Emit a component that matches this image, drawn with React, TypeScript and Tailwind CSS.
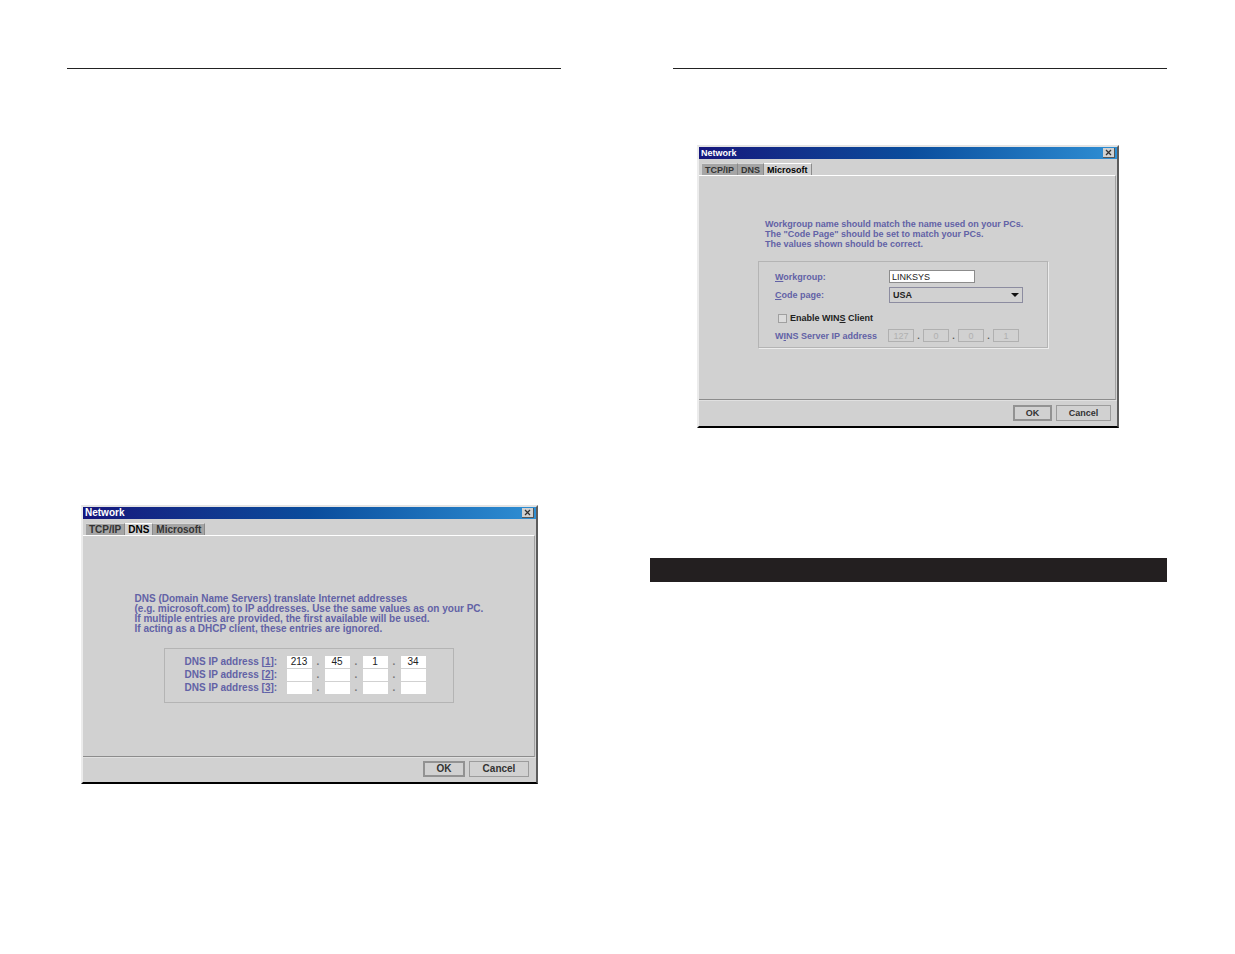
import { useId, useState, type ReactNode } from "react";

type DialogProps = {
  active: string;
  textClass: string;
  actionsClass: string;
  okClass: string;
  cancelClass: string;
  children: ReactNode;
};

function Tab({ label, active }: { label: string; active: boolean }) {
  return (
    <button
      type="button"
      role="tab"
      aria-selected={active}
      className={
        active
          ? "border-t border-r border-t-white border-r-[#8c8c8c] bg-[#d1d1d1] px-[3px] text-black"
          : "border-t border-r border-t-[#d8d8d8] border-r-[#8a8a8a] bg-[#a5a5a5] px-[3px] text-[#333]"
      }
    >
      {label}
    </button>
  );
}

function NetworkDialog({ active, textClass, actionsClass, okClass, cancelClass, children }: DialogProps) {
  return (
    <section
      aria-label="Network"
      className="border-t-2 border-r-2 border-b-2 border-l-2 border-t-[#e4e4e4] border-r-[#5c5c5c] border-b-black border-l-[#ececec] bg-[#d1d1d1]"
    >
      <div className={textClass}>
        <header className="flex h-3 items-center justify-between bg-linear-to-r from-[#15157c] via-[#0a4c9c] to-[#2f8fd4] pr-[2px] pl-[2px] text-white">
          <h2>Network</h2>
          <button
            type="button"
            aria-label="Close"
            className="flex h-[10px] w-3 items-center justify-center border-r border-b border-[#555] bg-[#d1d1d1]"
          >
            <svg viewBox="0 0 7 7" className="size-[7px]" aria-hidden="true">
              <path d="M1 1l5 5M6 1L1 6" stroke="#333" strokeWidth="1.3" />
            </svg>
          </button>
        </header>
        <div role="tablist" className="flex h-4 pt-1 pl-[3px]">
          {["TCP/IP", "DNS", "Microsoft"].map((name) => (
            <Tab key={name} label={name} active={name === active} />
          ))}
        </div>
        <div className="mr-[1px] border-t border-r border-b border-t-white border-r-[#a2a2a2] border-b-[#8c8c8c]">
          {children}
        </div>
        <footer className={actionsClass}>
          <button type="button" className={okClass}>
            OK
          </button>
          <button type="button" className={cancelClass}>
            Cancel
          </button>
        </footer>
      </div>
    </section>
  );
}

function DnsRow({ index, values }: { index: number; values: string[] }) {
  const id = useId();
  return (
    <div className="flex h-[13px] items-center">
      <label htmlFor={id} className="w-[102px] shrink-0 whitespace-nowrap text-[#6262a6]">
        DNS IP address [<u>{index}</u>]:
      </label>
      {values.map((value, i) => (
        <div key={i} className="flex items-center">
          {i > 0 && <span className="w-[13px] text-center text-[#777]">.</span>}
          <input
            id={i === 0 ? id : undefined}
            aria-label={i === 0 ? undefined : `DNS ${index} part ${i + 1}`}
            defaultValue={value}
            className="h-3 w-[25px] bg-white text-center font-normal text-[#222]"
          />
        </div>
      ))}
    </div>
  );
}

function DnsDialog() {
  return (
    <NetworkDialog
      active="DNS"
      textClass="text-[10px] leading-[10px] font-bold"
      actionsClass="flex justify-end gap-1 border-t border-[#e0e0e0] px-[7px] pt-[3px] pb-[5px]"
      okClass="h-4 w-[42px] border-2 border-[#929292] text-[#333]"
      cancelClass="h-4 w-[60px] border border-[#9c9c9c] text-[#333]"
    >
      <div className="flex flex-col items-center pt-[58px] pb-[53px]">
        <p className="w-[348px] whitespace-nowrap text-[#6262a6]">
          DNS (Domain Name Servers) translate Internet addresses
          <br />
          (e.g. microsoft.com) to IP addresses. Use the same values as on your PC.
          <br />
          If multiple entries are provided, the first available will be used.
          <br />
          If acting as a DHCP client, these entries are ignored.
        </p>
        <div className="mt-[14px] w-[290px] border border-[#b4b4b4] pt-[6px] pb-2 pl-5">
          <DnsRow index={1} values={["213", "45", "1", "34"]} />
          <DnsRow index={2} values={["", "", "", ""]} />
          <DnsRow index={3} values={["", "", "", ""]} />
        </div>
      </div>
    </NetworkDialog>
  );
}

function MicrosoftDialog() {
  const [wins, setWins] = useState(false);
  return (
    <NetworkDialog
      active="Microsoft"
      textClass="text-[9px] leading-[10px] font-bold"
      actionsClass="flex justify-end gap-1 border-t border-[#e0e0e0] px-[6px] pt-1 pb-[5px]"
      okClass="h-4 w-[39px] border-2 border-[#929292] text-[#333]"
      cancelClass="h-4 w-[55px] border border-[#9c9c9c] text-[#333]"
    >
      <div className="flex flex-col items-center pt-[43px] pr-2 pb-[51px]">
        <p className="w-[276px] whitespace-nowrap text-[#6262a6]">
          Workgroup name should match the name used on your PCs.
          <br />
          The "Code Page" should be set to match your PCs.
          <br />
          The values shown should be correct.
        </p>
        <div className="mt-3 w-[290px] border border-[#b4b4b4] pt-2 pb-1 pl-4 text-[#6262a6] shadow-[1px_1px_0_#ececec]">
          <div className="flex h-[13px] items-center">
            <label htmlFor="workgroup" className="w-[114px]">
              <u>W</u>orkgroup:
            </label>
            <input
              id="workgroup"
              defaultValue="LINKSYS"
              className="h-[13px] w-[86px] border border-[#8c8c8c] bg-white px-[2px] font-normal text-[#222]"
            />
          </div>
          <div className="mt-1 flex h-4 items-center">
            <label htmlFor="codepage" className="w-[114px]">
              <u>C</u>ode page:
            </label>
            <div className="relative">
              <select
                id="codepage"
                className="block h-4 w-[134px] appearance-none border border-[#8c8ca0] bg-[#d1d1d1] px-[3px] text-[#222]"
              >
                <option>USA</option>
              </select>
              <svg
                viewBox="0 0 8 4"
                className="pointer-events-none absolute top-[6px] right-1 h-1 w-2"
                aria-hidden="true"
              >
                <path d="M0 0h8L4 4z" fill="#111" />
              </svg>
            </div>
          </div>
          <label className="mt-[10px] flex h-[10px] items-center gap-[3px] pl-[3px] text-[#222]">
            <input
              type="checkbox"
              checked={wins}
              onChange={(e) => setWins(e.target.checked)}
              className="size-[9px] appearance-none border border-[#a0a0a0] bg-[#dcdcdc] checked:bg-[#333]"
            />
            <span>
              Enable WIN<u>S</u> Client
            </span>
          </label>
          <div className="mt-[5px] flex h-[15px] items-center">
            <label htmlFor="wins" className="w-[113px] whitespace-nowrap">
              W<u>I</u>NS Server IP address
            </label>
            {["127", "0", "0", "1"].map((value, i) => (
              <div key={i} className="flex items-center">
                {i > 0 && <span className="w-[9px] text-center text-[#555]">.</span>}
                <input
                  id={i === 0 ? "wins" : undefined}
                  aria-label={i === 0 ? undefined : `WINS part ${i + 1}`}
                  defaultValue={value}
                  disabled={!wins}
                  className="h-[13px] w-[26px] border border-[#b0b0b0] bg-[#d1d1d1] text-center font-normal text-[#b0b0b0]"
                />
              </div>
            ))}
          </div>
        </div>
      </div>
    </NetworkDialog>
  );
}

export default function App() {
  return (
    <main className="grid min-h-screen grid-cols-[617fr_618fr] bg-white pt-[68px] font-['Liberation_Sans',Arial,sans-serif]">
      <article className="pr-14 pl-[67px]">
        <hr className="border-t border-[#222]" />
        <div className="mt-[436px] mr-[23px] ml-[14px]">
          <DnsDialog />
        </div>
      </article>
      <article className="pr-[68px] pl-14">
        <hr className="border-t border-[#222]" />
        <div className="mt-[76px] mr-12 ml-6">
          <MicrosoftDialog />
        </div>
        <div className="mt-[130px] -ml-[23px] h-6 bg-[#231f20]" />
      </article>
    </main>
  );
}
